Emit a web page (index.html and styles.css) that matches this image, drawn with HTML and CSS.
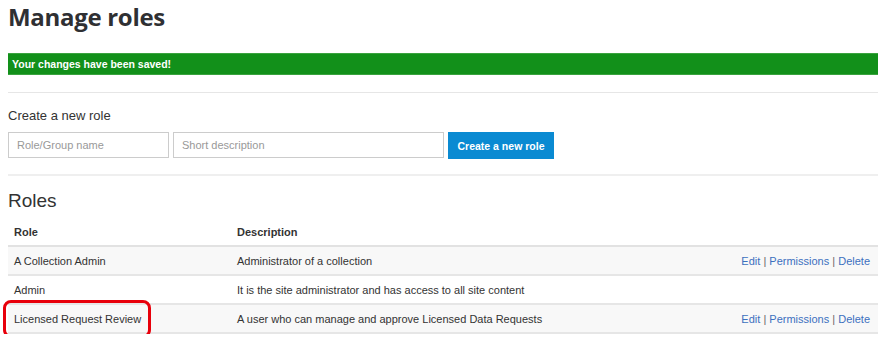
FILE: index.html
```html
<!DOCTYPE html>
<html>
<head>
<meta charset="utf-8">
<link rel="stylesheet" href="styles.css">
</head>
<body>
<div class="page">
  <h1 class="title">Manage roles</h1>
  <div class="alert">Your changes have been saved!</div>
  <hr class="rule thin">
  <h2 class="section-title">Create a new role</h2>
  <form class="create-form">
    <input class="field field-name" type="text" placeholder="Role/Group name">
    <input class="field field-desc" type="text" placeholder="Short description">
    <button class="btn" type="button">Create a new role</button>
  </form>
  <hr class="rule thick">
  <h2 class="roles-title">Roles</h2>
  <div class="table-wrap">
    <table class="roles">
      <colgroup>
        <col class="c-role">
        <col class="c-desc">
        <col class="c-act">
      </colgroup>
      <thead>
        <tr><th>Role</th><th>Description</th><th></th></tr>
      </thead>
      <tbody>
        <tr class="odd">
          <td>A Collection Admin</td>
          <td>Administrator of a collection</td>
          <td class="actions"><a href="#">Edit</a> <span class="sep">|</span> <a href="#">Permissions</a> <span class="sep">|</span> <a href="#">Delete</a></td>
        </tr>
        <tr>
          <td>Admin</td>
          <td>It is the site administrator and has access to all site content</td>
          <td class="actions"></td>
        </tr>
        <tr class="odd">
          <td>Licensed Request Review</td>
          <td>A user who can manage and approve Licensed Data Requests</td>
          <td class="actions"><a href="#">Edit</a> <span class="sep">|</span> <a href="#">Permissions</a> <span class="sep">|</span> <a href="#">Delete</a></td>
        </tr>
      </tbody>
    </table>
    <div class="highlight"></div>
  </div>
</div>
</body>
</html>
```
FILE: styles.css
```css
html, body {
  margin: 0;
  padding: 0;
  background: #fff;
}
body {
  font-family: "Liberation Sans", Arial, sans-serif;
  color: #333;
}
.page {
  padding-left: 8px;
  padding-top: 1px;
}
.title {
  margin: 0;
  font-family: "Open Sans", sans-serif;
  font-weight: 700;
  font-size: 24px;
  line-height: 32px;
  color: #2f3033;
  letter-spacing: -0.3px;
}
.alert {
  margin-top: 20px;
  height: 20px;
  line-height: 20px;
  background: #12901a;
  border-top: 1px solid #3aa33f;
  border-bottom: 1px solid #3aa33f;
  color: #fff;
  font-weight: 700;
  font-size: 10.5px;
  padding-left: 4px;
}
.rule {
  margin: 0;
  border: 0;
}
.rule.thin {
  margin-top: 17px;
  height: 1px;
  background: #e6e6e6;
}
.section-title {
  margin: 14px 0 0;
  font-weight: 400;
  font-size: 13px;
  line-height: 18px;
  color: #333;
}
.create-form {
  margin: 7px 0 0;
  display: flex;
  gap: 4px;
  height: 27px;
}
.field {
  box-sizing: border-box;
  height: 26px;
  border: 1px solid #ccc;
  padding: 0 8px;
  font-family: "Liberation Sans", Arial, sans-serif;
  font-size: 11px;
  color: #333;
  outline: none;
}
.field::placeholder {
  color: #999;
}
.field-name { width: 161px; }
.field-desc { width: 271px; }
.btn {
  box-sizing: border-box;
  width: 106px;
  height: 27px;
  border: 0;
  background: #0a8ad2;
  color: #fff;
  font-family: "Liberation Sans", Arial, sans-serif;
  font-weight: 700;
  font-size: 10.5px;
  padding: 0;
}
.rule.thick {
  margin-top: 15px;
  height: 2px;
  background: #efefef;
}
.roles-title {
  margin: 13px 0 0;
  font-weight: 400;
  font-size: 19px;
  line-height: 24px;
  color: #333;
}
.table-wrap {
  position: relative;
  margin-top: 5px;
}
.roles {
  width: 870px;
  border-collapse: collapse;
  table-layout: fixed;
  font-size: 11px;
  color: #333;
}
.c-role { width: 223px; }
.c-act { width: 200px; }
.roles th {
  text-align: left;
  font-weight: 700;
  height: 27px;
  padding: 0 6px;
  border-bottom: 2px solid #e2e2e2;
}
.roles td {
  height: 27px;
  padding: 0 6px;
  border-bottom: 2px solid #e6e6e6;
}
.roles tr.odd td {
  background: #f8f8f8;
}
.roles td.actions {
  text-align: right;
  padding-right: 8px;
}
.actions a {
  color: #3c70bf;
  text-decoration: none;
}
.actions .sep {
  color: #666;
}
.highlight {
  position: absolute;
  left: -5px;
  top: 82px;
  width: 142px;
  height: 32px;
  border: 3px solid #e8000b;
  border-radius: 8px;
}
```
